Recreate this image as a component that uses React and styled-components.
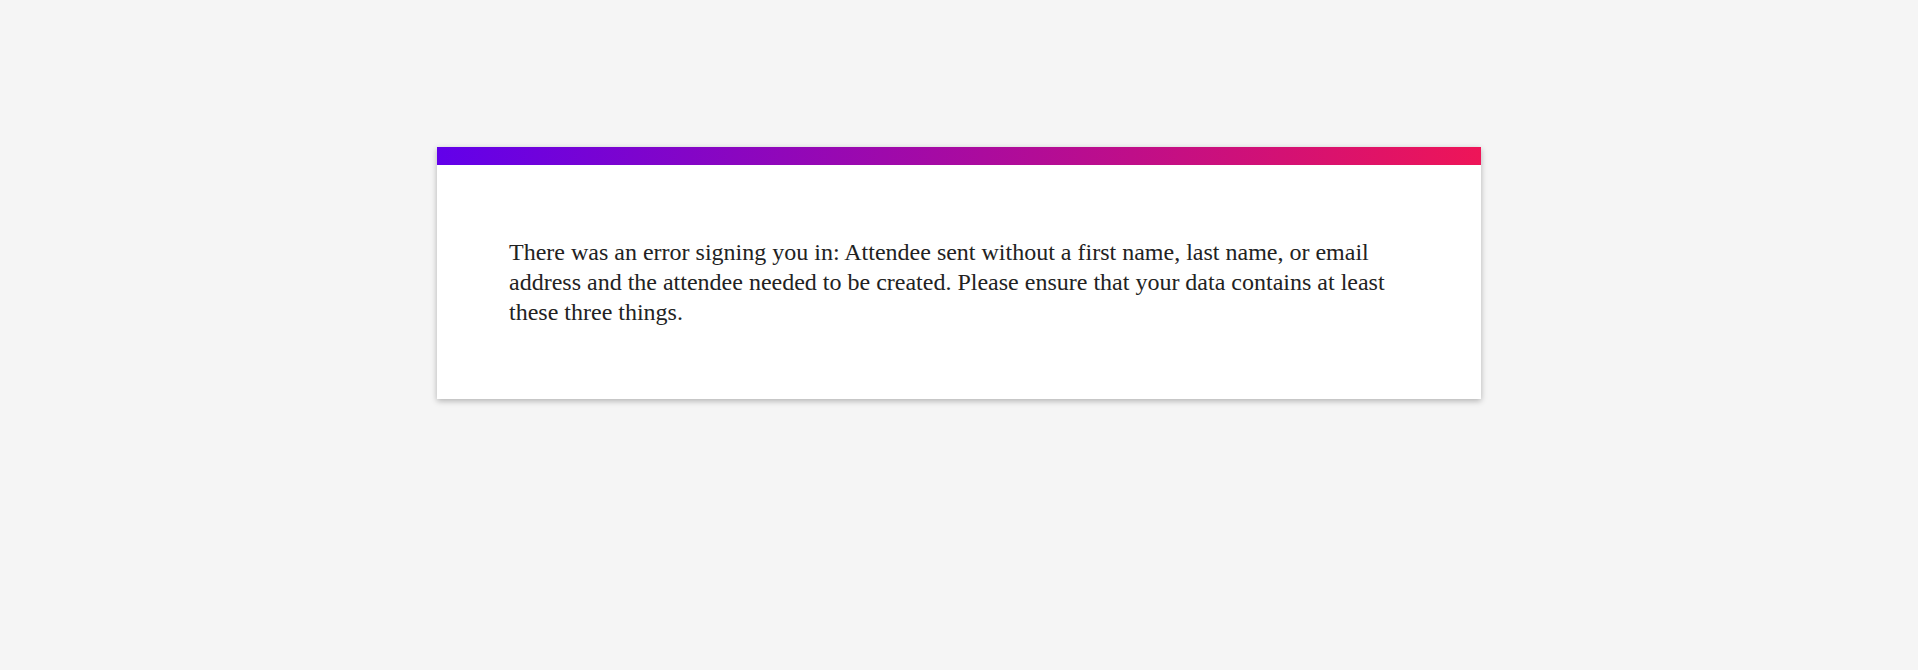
import React from "react";
import styled, { createGlobalStyle } from "styled-components";

const GlobalStyle = createGlobalStyle`
  body {
    margin: 0;
    background: #f5f5f5;
    font-family: "Liberation Serif", "Times New Roman", serif;
  }
`;

const Page = styled.div`
  min-height: 670px;
  display: flex;
  justify-content: center;
  align-items: flex-start;
  padding-top: 147px;
  box-sizing: border-box;
`;

const Card = styled.div`
  width: 1044px;
  background: #fff;
  box-shadow: 0 2px 6px rgba(0, 0, 0, 0.28);
`;

const Bar = styled.div`
  height: 18px;
  background: linear-gradient(to right, #6200ea, #ee1558);
`;

const Body = styled.div`
  padding: 72px;
`;

const Message = styled.p`
  margin: 0;
  font-size: 24px;
  line-height: 30px;
  color: #222;
`;

const App = () => {
  return (
    <>
      <GlobalStyle />
      <Page>
        <Card>
          <Bar />
          <Body>
            <Message>
              There was an error signing you in: Attendee sent without a first
              name, last name, or email address and the attendee needed to be
              created. Please ensure that your data contains at least these
              three things.
            </Message>
          </Body>
        </Card>
      </Page>
    </>
  );
};

export default App;
